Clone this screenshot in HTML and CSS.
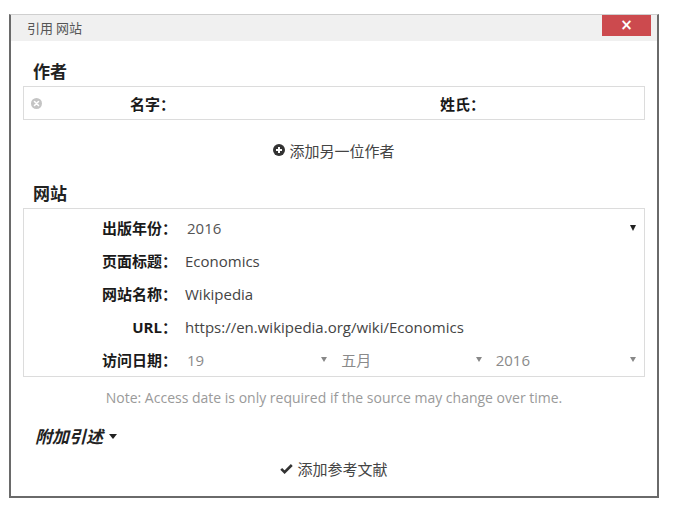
FILE: index.html
```html
<!DOCTYPE html>
<html lang="zh">
<head>
<meta charset="utf-8">
<link rel="stylesheet" href="styles.css">
</head>
<body>
<div class="dialog">
  <div class="titlebar">
    <span class="title">引用 网站</span>
    <span class="close">×</span>
  </div>
  <div class="content">
    <div class="heading">作者</div>
    <div class="author-box">
      <div class="half">
        <div class="label first">
          <svg class="remove" width="11" height="11" viewBox="0 0 11 11"><circle cx="5.5" cy="5.5" r="5.5" fill="#c4c4c4"/><path d="M3.5 3.5 L7.5 7.5 M7.5 3.5 L3.5 7.5" stroke="#fff" stroke-width="1.6" stroke-linecap="round"/></svg>
          <span>名字<span class="colon">：</span></span>
        </div>
        <div class="field"></div>
      </div>
      <div class="half">
        <div class="label"><span>姓氏<span class="colon">：</span></span></div>
        <div class="field"></div>
      </div>
    </div>
    <div class="add-author">
      <svg width="12" height="12" viewBox="0 0 12 12"><circle cx="6" cy="6" r="6" fill="#333"/><path d="M6 3 V9 M3 6 H9" stroke="#fff" stroke-width="2"/></svg>
      <span>添加另一位作者</span>
    </div>
    <div class="heading site">网站</div>
    <div class="site-box">
      <div class="row">
        <div class="rlabel">出版年份<span class="colon">：</span></div>
        <div class="rvalue select dark"><span class="val">2016</span><span class="arrow"></span></div>
      </div>
      <div class="row">
        <div class="rlabel">页面标题<span class="colon">：</span></div>
        <div class="rvalue"><span class="val">Economics</span></div>
      </div>
      <div class="row">
        <div class="rlabel">网站名称<span class="colon">：</span></div>
        <div class="rvalue"><span class="val">Wikipedia</span></div>
      </div>
      <div class="row">
        <div class="rlabel">URL<span class="colon">：</span></div>
        <div class="rvalue"><span class="val">https://en.wikipedia.org/wiki/Economics</span></div>
      </div>
      <div class="row">
        <div class="rlabel">访问日期<span class="colon">：</span></div>
        <div class="rvalue dates">
          <div class="select light"><span class="val">19</span><span class="arrow"></span></div>
          <div class="select light"><span class="val">五月</span><span class="arrow"></span></div>
          <div class="select light"><span class="val">2016</span><span class="arrow"></span></div>
        </div>
      </div>
    </div>
    <div class="note">Note: Access date is only required if the source may change over time.</div>
    <div class="extra">附加引述 <span class="caret"></span></div>
    <div class="add-ref">
      <svg width="13" height="11" viewBox="0 0 13 11"><path d="M1.2 5.8 L4.6 9.2 L11.8 2" fill="none" stroke="#333" stroke-width="2.6"/></svg>
      <span>添加参考文献</span>
    </div>
  </div>
</div>
</body>
</html>
```

FILE: styles.css
```css
html, body {
  margin: 0;
  padding: 0;
  background: #fff;
}
body {
  font-family: "Open Sans", "Noto Sans CJK SC", sans-serif;
  color: #333;
}
.dialog {
  margin: 14px 0 0 9px;
  width: 650px;
  height: 484px;
  box-sizing: border-box;
  border: 2px solid #6a6a6a;
  border-top: 1px solid #cfcfcf;
  background: #fff;
}
.titlebar {
  height: 26px;
  background: #f0f0f0;
  display: flex;
  justify-content: space-between;
  align-items: flex-start;
}
.title {
  font-family: "Noto Sans CJK SC", sans-serif;
  font-size: 13px;
  color: #555;
  line-height: 26px;
  padding-left: 16px;
}
.close {
  width: 49px;
  height: 21px;
  margin-right: 6px;
  background: #cc4a4e;
  color: #fff;
  font-family: "DejaVu Sans", sans-serif;
  font-weight: bold;
  font-size: 15px;
  line-height: 20px;
  text-align: center;
}
.content {
  padding: 18px 12px 0;
}
.heading {
  font-family: "Noto Sans CJK SC", sans-serif;
  font-size: 17px;
  font-weight: bold;
  color: #222;
  line-height: 24px;
  height: 24px;
  padding-left: 10px;
  margin-bottom: 3px;
}
.heading.site {
  margin-top: 21px;
}
.colon {
  font-family: "Noto Sans CJK JP", sans-serif;
}
.author-box {
  height: 34px;
  box-sizing: border-box;
  border: 1px solid #dcdcdc;
  display: grid;
  grid-template-columns: 1fr 1fr;
}
.half {
  display: flex;
  align-items: center;
}
.label {
  width: 151px;
  box-sizing: border-box;
  display: flex;
  align-items: center;
  justify-content: flex-end;
  font-family: "Noto Sans CJK SC", sans-serif;
  font-weight: bold;
  font-size: 15px;
  color: #1a1a1a;
}
.label.first {
  justify-content: space-between;
  padding-left: 7px;
}
.remove {
  display: block;
}
.add-author, .add-ref {
  display: flex;
  justify-content: center;
  align-items: center;
  gap: 4px;
  height: 20px;
  font-family: "Noto Sans CJK SC", sans-serif;
  font-size: 15px;
  color: #444;
}
.add-author {
  margin-top: 20px;
}
.add-ref {
  margin-top: 10px;
}
.site-box {
  height: 169px;
  box-sizing: border-box;
  border: 1px solid #dcdcdc;
  padding-top: 2px;
}
.row {
  height: 33px;
  display: flex;
  align-items: center;
}
.rlabel {
  width: 153px;
  flex: none;
  text-align: right;
  font-family: "Open Sans", "Noto Sans CJK SC", sans-serif;
  font-weight: bold;
  font-size: 15px;
  color: #1a1a1a;
}
.rvalue {
  margin-left: 8px;
  flex: 1;
  display: flex;
  align-items: center;
  font-size: 15px;
  color: #444;
}
.rvalue.select {
  padding-left: 2px;
}
.rvalue.dates {
  gap: 4px;
}
.select {
  display: flex;
  align-items: center;
  justify-content: space-between;
  padding-right: 8px;
}
.dates .select {
  flex: 1;
  padding-left: 2px;
}
.dark .val { color: #555; }
.light .val { color: #8a8a8a; }
.arrow {
  width: 0;
  height: 0;
  border-left: 3.5px solid transparent;
  border-right: 3.5px solid transparent;
  border-top: 6px solid #222;
}
.light .arrow {
  border-top-color: #888;
  border-left-width: 3px;
  border-right-width: 3px;
  border-top-width: 5px;
}
.note {
  margin-top: 11px;
  height: 20px;
  line-height: 20px;
  text-align: center;
  font-size: 14px;
  color: #9a9a9a;
}
.extra {
  margin-top: 16px;
  height: 24px;
  line-height: 24px;
  padding-left: 12px;
  font-family: "Noto Sans CJK SC", sans-serif;
  font-size: 17px;
  font-weight: bold;
  font-style: italic;
  color: #222;
  display: flex;
  align-items: center;
  gap: 6px;
}
.caret {
  width: 0;
  height: 0;
  border-left: 4px solid transparent;
  border-right: 4px solid transparent;
  border-top: 5px solid #222;
}
```
